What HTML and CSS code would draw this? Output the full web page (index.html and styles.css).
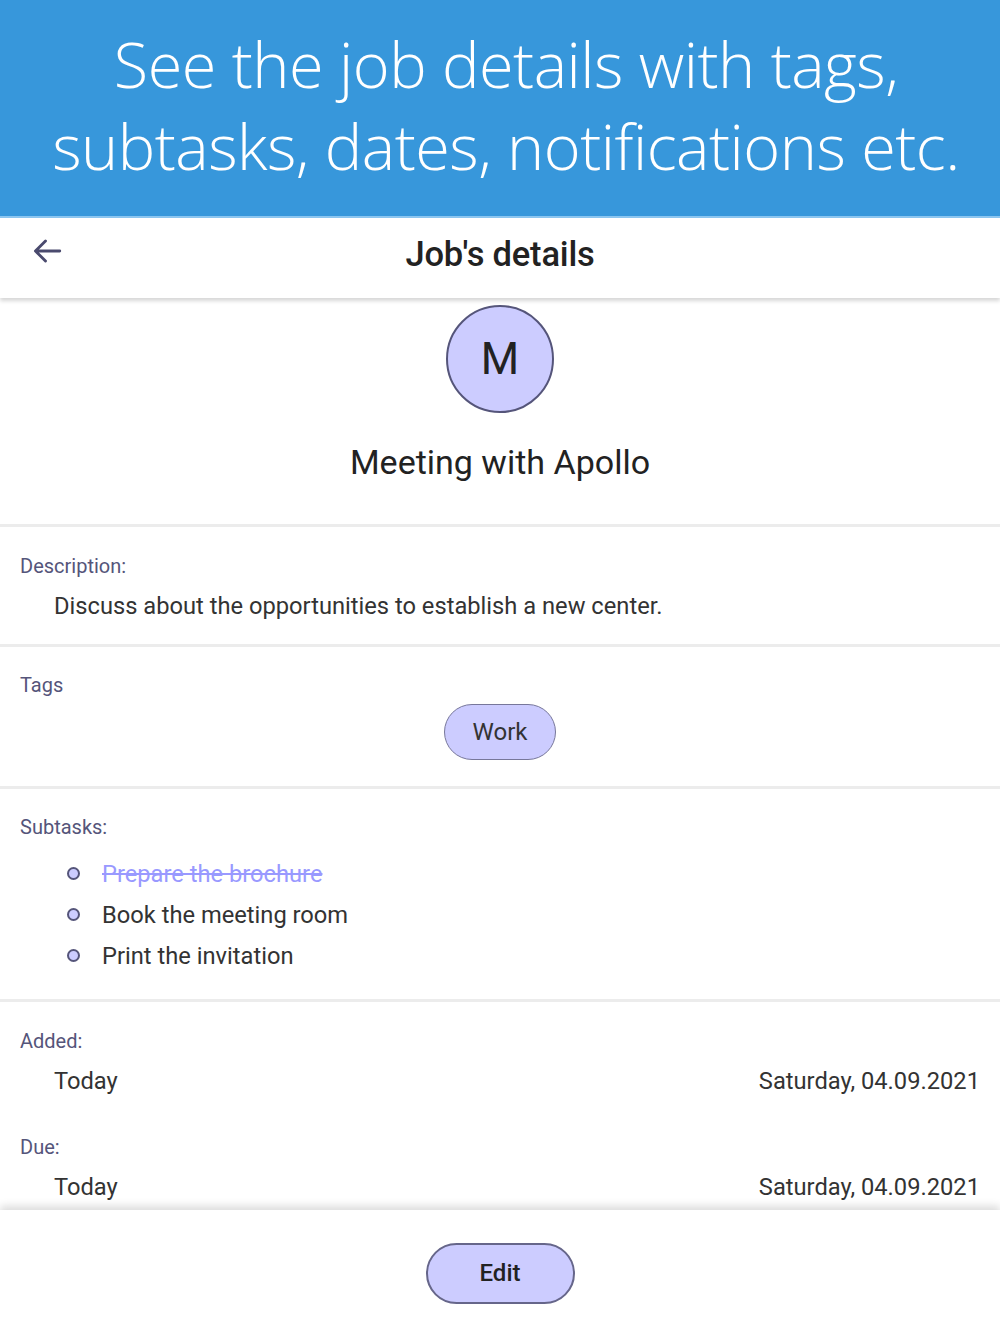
FILE: index.html
```html
<!DOCTYPE html>
<html>
<head>
<meta charset="utf-8">
<link rel="stylesheet" href="styles.css">
</head>
<body>
<div class="page">
  <header class="banner">
    <div class="banner-text">See the job details with tags,<br>subtasks, dates, notifications etc.</div>
  </header>
  <div class="appbar">
    <button class="back" aria-label="Back">
      <svg width="36" height="36" viewBox="0 0 24 24"><path d="M20.5 12H4.5M11 5.3L4.3 12l6.7 6.7" fill="none" stroke="#4a4a6e" stroke-width="1.9" stroke-linecap="round" stroke-linejoin="round"/></svg>
    </button>
    <div class="appbar-title">Job's details</div>
  </div>
  <main class="content">
    <section class="hero">
      <div class="avatar">M</div>
      <div class="job-title">Meeting with Apollo</div>
    </section>
    <section class="section desc">
      <div class="label">Description:</div>
      <div class="value">Discuss about the opportunities to establish a new center.</div>
    </section>
    <section class="section tags">
      <div class="label">Tags</div>
      <div class="chip-row"><span class="chip">Work</span></div>
    </section>
    <section class="section subtasks">
      <div class="label">Subtasks:</div>
      <ul class="list">
        <li class="item done"><span class="dot"></span><span class="item-text">Prepare the brochure</span></li>
        <li class="item"><span class="dot"></span><span class="item-text">Book the meeting room</span></li>
        <li class="item"><span class="dot"></span><span class="item-text">Print the invitation</span></li>
      </ul>
    </section>
    <section class="section dates">
      <div class="label">Added:</div>
      <div class="date-row"><span>Today</span><span>Saturday, 04.09.2021</span></div>
      <div class="label due">Due:</div>
      <div class="date-row"><span>Today</span><span>Saturday, 04.09.2021</span></div>
    </section>
  </main>
  <footer class="bottombar">
    <button class="edit">Edit</button>
  </footer>
</div>
</body>
</html>
```
FILE: styles.css
```css
* { box-sizing: border-box; }
html, body { margin: 0; padding: 0; background: #fff; }
body { font-family: Roboto, "Noto Sans", sans-serif; color: #2b2b2b; }
.page { width: 1000px; height: 1334px; display: flex; flex-direction: column; overflow: hidden; }

.banner {
  height: 218px; background: #3797db; display: flex; align-items: center; justify-content: center;
  border-bottom: 2px solid #8cc6f0; padding-left: 12px;
}
.banner-text {
  font-family: "Open Sans", sans-serif; font-weight: 300; color: #fff;
  font-size: 63px; line-height: 82px; text-align: center; letter-spacing: -0.5px;
  margin-top: -6px;
}

.appbar {
  height: 80px; display: flex; align-items: center; justify-content: center;
  background: #fff; position: relative; z-index: 2;
  box-shadow: 0 3px 4px rgba(0,0,0,0.16);
}
.back {
  position: absolute; left: 29px; top: 15px; border: 0; background: none; padding: 0;
  width: 36px; height: 36px; display: flex; align-items: center; justify-content: center;
}
.appbar-title { font-size: 34.5px; font-weight: 500; color: #222; letter-spacing: -0.2px; margin-top: -8px; }

.content { flex: 1; display: flex; flex-direction: column; }

.hero { height: 226px; display: flex; flex-direction: column; align-items: center; padding-top: 7px; }
.avatar {
  width: 108px; height: 108px; border-radius: 50%; background: #ccccff; border: 2px solid #55557a;
  display: flex; align-items: center; justify-content: center; font-size: 44px; color: #222;
}
.job-title { margin-top: 29px; font-size: 34px; line-height: 40px; color: #222; }

.section { border-top: 3px solid #ececec; padding: 0 20px; }
.label { font-size: 20px; line-height: 24px; color: #55557a; }
.value { margin-top: 14px; padding-left: 34px; font-size: 23.7px; line-height: 28px; color: #333; }

.desc { padding-top: 27px; padding-bottom: 24px; }

.tags { padding-top: 26px; padding-bottom: 26px; }
.chip-row { display: flex; justify-content: center; margin-top: 7px; }
.chip {
  width: 112px; height: 56px; border-radius: 28px; background: #ccccff; border: 1.5px solid #77779a;
  display: flex; align-items: center; justify-content: center; font-size: 24px; color: #333;
}

.subtasks { padding-top: 26px; padding-bottom: 23px; }
.list { list-style: none; margin: 14px 0 0; padding: 0 0 0 47px; }
.item { display: flex; align-items: center; height: 41px; font-size: 23.7px; color: #333; }
.dot { width: 13px; height: 13px; border-radius: 50%; background: #ccccff; border: 2px solid #55557a; margin-right: 22px; }
.done .item-text { color: #9999ff; text-decoration: line-through; }

.dates { padding-top: 27px; flex: 1; }
.date-row {
  display: flex; justify-content: space-between; margin-top: 13px; padding-left: 34px;
  font-size: 23.7px; line-height: 30px; color: #333;
}
.label.due { margin-top: 39px; }

.bottombar {
  height: 124px; display: flex; align-items: center; justify-content: center; background: #fff;
  position: relative; z-index: 2; box-shadow: 0 -4px 8px rgba(0,0,0,0.14);
}
.edit {
  width: 149px; height: 61px; border-radius: 31px; background: #ccccff; border: 2px solid #66668a;
  font-family: Roboto, sans-serif; font-size: 24px; font-weight: 500; color: #222; margin-top: 2px;
}
```
